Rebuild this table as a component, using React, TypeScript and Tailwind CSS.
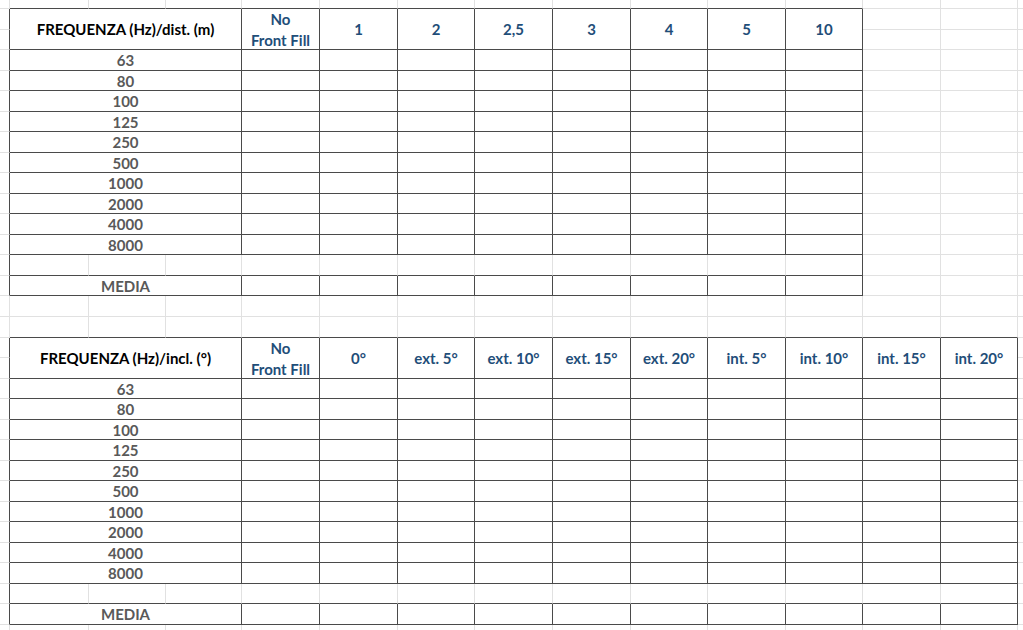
import React from "react";

type T = { top: number; end: number; title: string; headers: string[] };

const TABLES: T[] = [
  {
    top: 1,
    end: 11,
    title: "FREQUENZA (Hz)/dist. (m)",
    headers: ["NFF", "1", "2", "2,5", "3", "4", "5", "10"],
  },
  {
    top: 17,
    end: 13,
    title: "FREQUENZA (Hz)/incl. (°)",
    headers: [
      "NFF",
      "0°",
      "ext. 5°",
      "ext. 10°",
      "ext. 15°",
      "ext. 20°",
      "int. 5°",
      "int. 10°",
      "int. 15°",
      "int. 20°",
    ],
  },
];

const FREQS = ["63", "80", "100", "125", "250", "500", "1000", "2000", "4000", "8000"];
const ROWS = 32;
const COLS = 15;

function tableAtRow(r: number): T | undefined {
  return TABLES.find((t) => r >= t.top && r <= t.top + 13);
}

function rightDark(r: number, b: number): boolean {
  const t = tableAtRow(r);
  if (!t) return false;
  if (b === 1 || b === t.end + 1) return true;
  if (b > 1 && b <= t.end) {
    if (r === t.top + 12) return false;
    return true;
  }
  return false;
}

function bottomDark(rb: number, c: number): boolean {
  return TABLES.some((t) => c >= 1 && c <= t.end && rb >= t.top && rb <= t.top + 14);
}

type Cell = {
  r: number;
  c: number;
  rs: number;
  cs: number;
  kind: "empty" | "title" | "header" | "label";
  text?: string;
};

function buildCells(): Cell[] {
  const cells: Cell[] = [];
  for (let r = 0; r < ROWS; r++) {
    const t = tableAtRow(r);
    let c = 0;
    while (c < COLS) {
      if (t && c >= 1 && c <= t.end) {
        const rr = r - t.top;
        if (rr === 0) {
          if (c === 1) {
            cells.push({ r, c, rs: 2, cs: 3, kind: "title", text: t.title });
            c += 3;
          } else {
            cells.push({ r, c, rs: 2, cs: 1, kind: "header", text: t.headers[c - 4] });
            c += 1;
          }
          continue;
        }
        if (rr === 1) {
          c += 1;
          continue;
        }
        if (rr >= 2 && rr <= 11 && c === 1) {
          cells.push({ r, c, rs: 1, cs: 3, kind: "label", text: FREQS[rr - 2] });
          c += 3;
          continue;
        }
        if (rr === 13 && c === 1) {
          cells.push({ r, c, rs: 1, cs: 3, kind: "label", text: "MEDIA" });
          c += 3;
          continue;
        }
      }
      cells.push({ r, c, rs: 1, cs: 1, kind: "empty" });
      c += 1;
    }
  }
  return cells;
}

function borderClass(cell: Cell): string {
  const parts: string[] = [];
  const b = cell.c + cell.cs;
  if (b < COLS) {
    parts.push("border-r");
    parts.push(rightDark(cell.r, b) ? "border-r-[#4a4a4a]" : "border-r-[#e1e1e1]");
  }
  const rb = cell.r + cell.rs;
  if (rb < ROWS) {
    parts.push("border-b");
    parts.push(bottomDark(rb, cell.c) ? "border-b-[#4a4a4a]" : "border-b-[#e1e1e1]");
  }
  return parts.join(" ");
}

function spanClass(cell: Cell): string {
  const a = cell.cs === 3 ? "col-span-3" : "";
  const b = cell.rs === 2 ? "row-span-2" : "";
  return `${a} ${b}`;
}

function Content({ cell }: { cell: Cell }) {
  if (cell.kind === "title") {
    return <span className="whitespace-nowrap text-black font-bold">{cell.text}</span>;
  }
  if (cell.kind === "header") {
    if (cell.text === "NFF") {
      return (
        <div className="flex flex-col items-center text-[#1f4e79] font-bold leading-[21px] pt-[1px]">
          <span>No</span>
          <span className="whitespace-nowrap">Front Fill</span>
        </div>
      );
    }
    return <span className="whitespace-nowrap text-[#1f4e79] font-bold">{cell.text}</span>;
  }
  if (cell.kind === "label") {
    return <span className="whitespace-nowrap text-[#595959] font-bold">{cell.text}</span>;
  }
  return null;
}

export default function App() {
  const cells = buildCells();
  return (
    <div className="w-[1023px] h-[630px] overflow-hidden bg-white font-['Lato',sans-serif] text-[15px] leading-[20px]">
      <div className="grid grid-cols-[10px_79px_77px_76px_78px_78px_77px_78px_78px_77px_78px_77px_78px_77px_5px] grid-rows-[9px_21px_20px_21px_20px_21px_20px_21px_20px_21px_20px_21px_20px_21px_20px_21px_21px_20px_21px_20px_21px_20px_21px_20px_21px_20px_21px_20px_21px_20px_21px_6px]">
        {cells.map((cell) => (
          <div
            key={`${cell.r}-${cell.c}`}
            className={`flex items-center justify-center overflow-hidden ${spanClass(cell)} ${borderClass(cell)}`}
          >
            <Content cell={cell} />
          </div>
        ))}
      </div>
    </div>
  );
}
